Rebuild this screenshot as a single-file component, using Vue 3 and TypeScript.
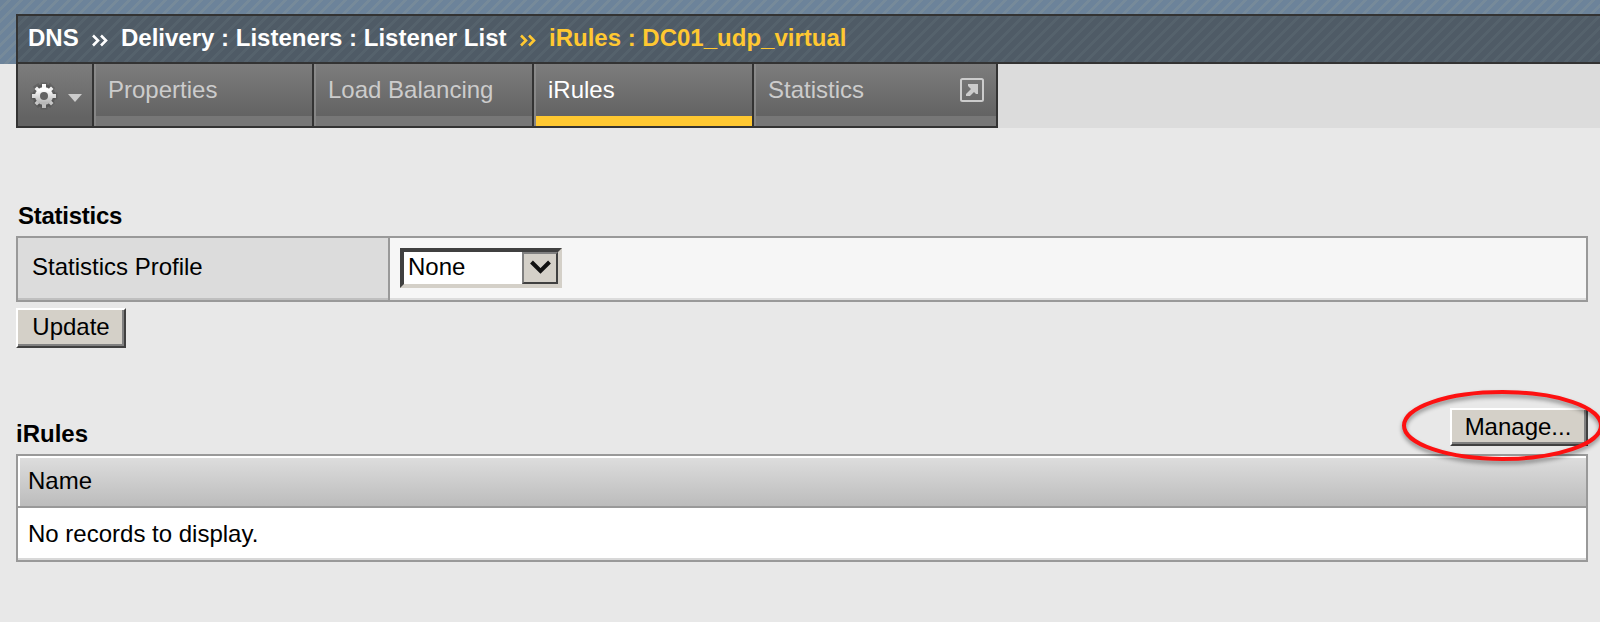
<script setup lang="ts">
interface Tab { label: string; cls: string; popup?: boolean }

const tabs: Tab[] = [
  { label: 'Properties', cls: 'tab' },
  { label: 'Load Balancing', cls: 'tab' },
  { label: 'iRules', cls: 'tab active' },
  { label: 'Statistics', cls: 'tab wide', popup: true },
]
</script>

<template>
  <div class="page">
    <header class="top">
      <div class="crumbs">
        <span class="dns">DNS</span>
        <svg class="sep" width="30" height="28" viewBox="0 0 30 28">
          <path d="M1 11.500l5 5-5 5M9 11.500l5 5-5 5" fill="none" stroke="#fff" stroke-width="2.6" />
        </svg>
        <span class="path">Delivery : Listeners : Listener List</span>
        <svg class="sep" width="30" height="28" viewBox="0 0 30 28">
          <path d="M1 11.500l5 5-5 5M9 11.500l5 5-5 5" fill="none" stroke="#ffc831" stroke-width="2.6" />
        </svg>
        <span class="here">iRules : DC01_udp_virtual</span>
      </div>
    </header>
    <nav class="nav">
      <div class="tabs">
        <div class="gear">
          <svg width="62" height="32" viewBox="0 0 62 32">
            <defs>
              <linearGradient id="g" x1="0" y1="0" x2="0" y2="1">
                <stop offset="0" stop-color="#fff" />
                <stop offset="1" stop-color="#b8b8b8" />
              </linearGradient>
            </defs>
            <g transform="translate(0 1)">
              <circle cx="14" cy="16" r="11.500" fill="#4c4c4c" opacity=".5" />
              <path d="M12 4h4v24h-4zM2 14h24v4H2zM5 7l3-2 15 18-3 3zM20 5l3 3-15 18-3-3z" fill="#4c4c4c" stroke="#4c4c4c" stroke-width="3" opacity=".4" />
              <path d="M12 4h4v24h-4zM2 14h24v4H2zM4.500 9l2.500-2.500 16.500 16.500-2.500 2.500zM21 6.500l2.500 2.500-16.500 16.500-2.500-2.500z" fill="url(#g)" />
              <circle cx="14" cy="16" r="6.500" fill="none" stroke="url(#g)" stroke-width="5" />
              <circle cx="14" cy="16" r="4" fill="#626262" />
              <path d="M38 14h14l-7 8z" fill="#ccc" />
            </g>
          </svg>
        </div>
        <div v-for="t in tabs" :key="t.label" :class="t.cls">
          <span>{{ t.label }}</span>
          <svg v-if="t.popup" class="popup" width="24" height="24" viewBox="0 0 24 24">
            <rect x="1" y="1" width="22" height="22" rx="1.500" fill="none" stroke="#ccc" stroke-width="2" />
            <path d="M8 6h10v10h-2l-2-2-4 4H6v-2l5-5-3-3z" fill="#ccc" />
          </svg>
        </div>
      </div>
    </nav>

    <main class="body">
      <h2 class="first">Statistics</h2>
      <div class="form">
        <div class="label">Statistics Profile</div>
        <div class="field">
          <div class="select">
            <span>None</span>
            <div class="drop">
              <svg width="32" height="28" viewBox="0 0 32 28">
                <path d="M7.500 8l9 9 9-9" fill="none" stroke="#111" stroke-width="4" />
              </svg>
            </div>
          </div>
        </div>
      </div>
      <button class="btn update">Update</button>

      <div class="listhead">
        <h2>iRules</h2>
        <div class="managebox">
          <button class="btn manage">Manage...</button>
          <svg class="ring" width="206" height="84" viewBox="0 0 206 84">
            <ellipse cx="102.500" cy="37.500" rx="98.500" ry="33.500" fill="none" stroke="#fd1111" stroke-width="4" />
          </svg>
        </div>
      </div>
      <div class="list">
        <div class="lh">Name</div>
        <div class="lr">No records to display.</div>
      </div>
    </main>
  </div>
</template>

<style>
body { margin: 0; background: #e8e8e8; overflow: hidden; }
</style>

<style scoped>
.page {
  box-sizing: border-box;
  width: 1600px;
  height: 622px;
  overflow: hidden;
  background: #e8e8e8;
  color: #000;
  font: 24px/28px "Liberation Sans", Arial, sans-serif;
}
.top {
  box-sizing: border-box;
  height: 64px;
  padding: 14px 0 0 16px;
  background: repeating-linear-gradient(135deg, #6c839a 0 5px, #768a9a 5px 8.485px);
}
.crumbs {
  box-sizing: border-box;
  height: 50px;
  display: flex;
  padding: 8px 0 0 10px;
  border: 2px solid #333;
  border-right: 0;
  background: repeating-linear-gradient(135deg, #4f5b66 0 5px, #55626c 5px 8.485px);
  color: #fff;
  font-weight: bold;
  white-space: nowrap;
}
.dns { width: 64px; }
.sep { flex: none; margin-right: -1px; }
.path { width: 399px; }
.here { color: #ffc831; }
.nav { height: 64px; padding-left: 16px; background: linear-gradient(90deg, #e8e8e8 16px, #dcdcdc 16px); }
.tabs {
  box-sizing: border-box;
  width: 982px;
  height: 64px;
  display: flex;
  border: solid #333;
  border-width: 0 2px 2px;
}
.gear {
  box-sizing: border-box;
  width: 74px;
  padding: 15px 0 0 12px;
  background: linear-gradient(#7d7d7d, #636363 54px);
}
.tab {
  --line: #777;
  box-sizing: border-box;
  width: 220px;
  display: flex;
  justify-content: space-between;
  padding: 12px 12px 0 14px;
  border-left: 2px solid #333;
  background:
    linear-gradient(#8a8a8a, #858585) 0 0 / 2px 100% no-repeat,
    linear-gradient(var(--line), var(--line)) 0 100% / 100% 10px no-repeat,
    linear-gradient(#7d7d7d, #636363 52px);
  color: #ccc;
  white-space: nowrap;
}
.wide { width: 244px; }
.active { --line: #ffc831; color: #fff; }
.popup { margin-top: 2px; }
.body { padding: 0 12px 0 16px; }
h2 { margin: 0; font: bold 24px/28px "Liberation Sans", Arial, sans-serif; }
.first { padding: 74px 0 6px 2px; letter-spacing: -.25px; }
.form {
  box-sizing: border-box;
  height: 66px;
  display: flex;
  border: 2px solid #999;
  border-bottom: 2px solid #999;
  box-shadow: 0 0 0 0 #999;
}
.label {
  box-sizing: border-box;
  width: 372px;
  height: 62px;
  padding: 15px 0 0 14px;
  border-right: 2px solid #999;
  background: linear-gradient(#dcdcdc 60px, #bfbfbf 60px);
}
.field {
  box-sizing: border-box;
  flex: 1;
  height: 62px;
  padding: 10px;
  background: linear-gradient(#f6f6f6 60px, #dcdcdc 60px);
}
.select {
  box-sizing: border-box;
  width: 162px;
  height: 40px;
  display: flex;
  justify-content: space-between;
  border: 4px solid;
  border-color: #404040 #d4d0c8 #d4d0c8 #404040;
  background: #fff;
}
.select span { padding: 1px 0 0 4px; }
.drop {
  box-sizing: border-box;
  width: 36px;
  height: 32px;
  border: 2px solid;
  border-color: #808080 #404040 #404040 #808080;
  background: #d4d0c8;
}
.drop svg { display: block; }
.btn {
  box-sizing: border-box;
  display: block;
  margin: 0;
  padding: 0;
  border: 2px solid;
  border-color: #fff #404040 #404040 #fff;
  box-shadow: inset -2px -2px #808080;
  border-radius: 0;
  background: #d4d0c8;
  color: #000;
  font: 24px/28px "Liberation Sans", Arial, sans-serif;
}
.update { width: 110px; height: 40px; margin-top: 6px; padding-bottom: 2px; }
.listhead { display: flex; justify-content: space-between; height: 46px; margin-top: 60px; }
.listhead h2 { padding-top: 12px; }
.managebox { position: relative; }
.manage { width: 138px; height: 38px; padding: 0 2px 0 0; }
.ring { position: absolute; left: -50px; top: -20px; filter: drop-shadow(0 3px 2px rgba(0, 0, 0, .4)); }
.list {
  box-sizing: border-box;
  height: 108px;
  border: 2px solid #999;
  background: #fff;
  box-shadow: inset 0 -2px #d8d8d8;
}
.lh {
  box-sizing: border-box;
  height: 52px;
  padding: 9px 0 0 10px;
  border-bottom: 2px solid #999;
  background: linear-gradient(#dedede, #bcbcbc);
  box-shadow: inset 2px 2px #fff;
  padding-top: 11px;
}
.lr { padding: 12px 0 0 10px; }
</style>
